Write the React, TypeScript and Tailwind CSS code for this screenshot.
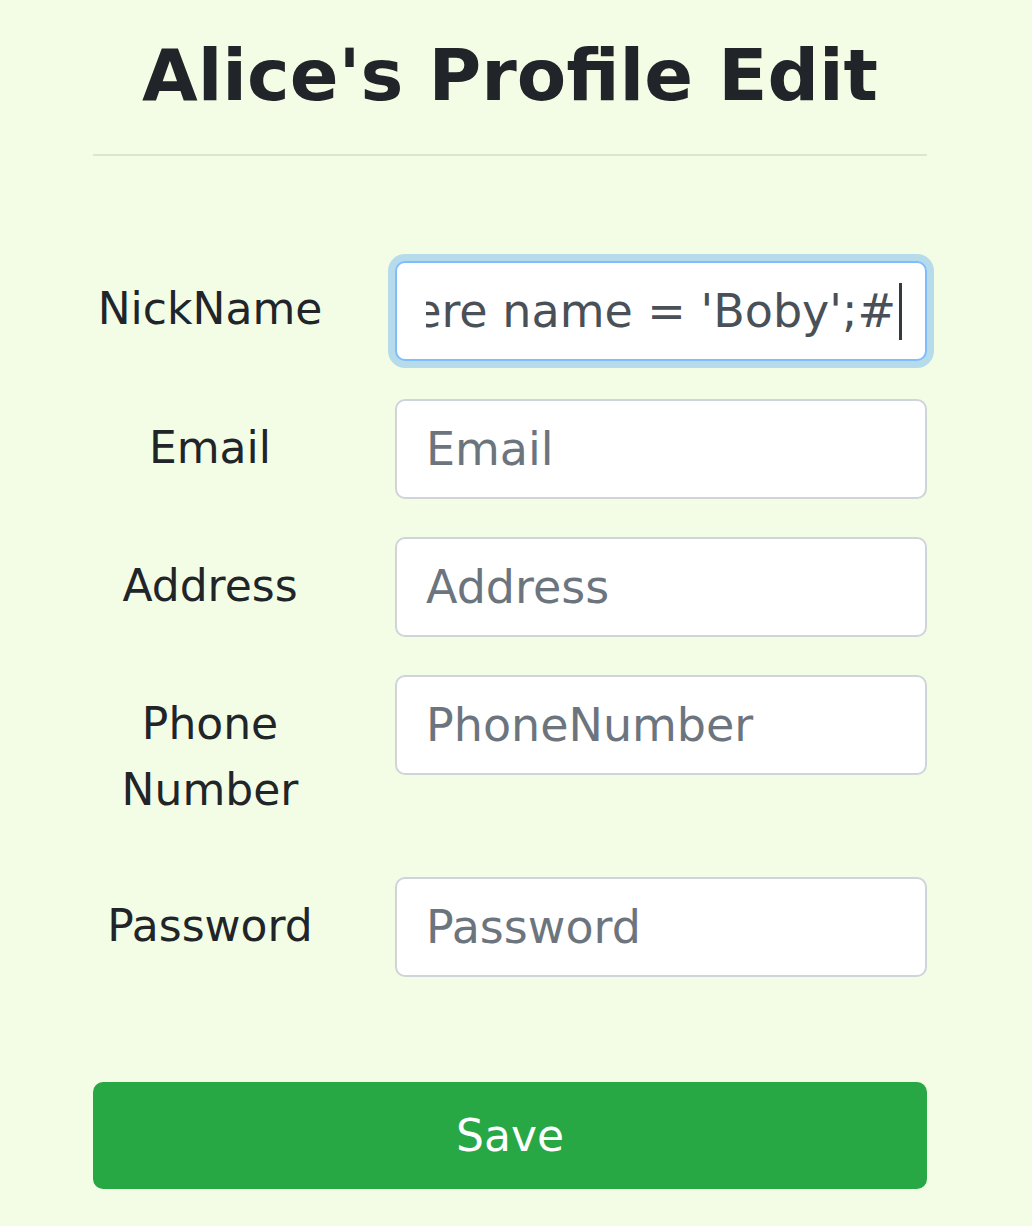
import React from 'react';

const fields = [
  { label: 'Email', placeholder: 'Email' },
  { label: 'Address', placeholder: 'Address' },
  { label: 'Phone Number', placeholder: 'PhoneNumber', wrap: true },
  { label: 'Password', placeholder: 'Password' },
];

export default function App() {
  return (
    <div className="min-h-[1226px] bg-[#f3fde5] font-['DejaVu_Sans',sans-serif] text-[#212529]">
      <div className="ml-[93px] w-[834px] pt-[32px]">
        <h1 className="text-center text-[72px] font-bold leading-[1.2]">Alice's Profile Edit</h1>
        <hr className="mt-[36px] border-t-[2px] border-[#dde5d2]" />

        <form className="mt-[105px]">
          <div className="mb-[38px] grid grid-cols-[234px_minmax(0,1fr)] gap-x-[68px]">
            <label className="pt-[15px] pb-[18px] text-center text-[44px] leading-[66px]">NickName</label>
            {/* focused input, scrolled to the end of the typed value */}
            <div className="flex h-[100px] w-full items-center rounded-[10px] border-[2px] border-[#80bdff] bg-white pl-[29px] pr-[23px] shadow-[0_0_0_7px_rgba(0,123,255,0.25)]">
              <div className="flex min-w-0 flex-1 items-center justify-end overflow-hidden whitespace-nowrap text-[46px] text-[#495057]">
                <span className="shrink-0">where name = 'Boby';#</span>
                <span className="ml-[3px] h-[57px] w-[3px] shrink-0 bg-[#343a40]" />
              </div>
            </div>
          </div>

          {fields.map((f) => (
            <div key={f.label} className="mb-[38px] grid grid-cols-[234px_minmax(0,1fr)] gap-x-[68px]">
              <label className="pt-[16px] pb-[16px] text-center text-[44px] leading-[66px]">
                {f.wrap ? (
                  <>
                    Phone
                    <br />
                    Number
                  </>
                ) : (
                  f.label
                )}
              </label>
              <input
                placeholder={f.placeholder}
                className="h-[100px] w-full min-w-0 rounded-[10px] border-[2px] border-[#ced4da] bg-white px-[29px] text-[46px] text-[#495057] outline-none placeholder:text-[#6c757d]"
              />
            </div>
          ))}

          <button
            type="button"
            className="mt-[67px] h-[107px] w-full rounded-[10px] bg-[#28a745] text-[44px] text-white"
          >
            Save
          </button>
        </form>
      </div>
    </div>
  );
}
